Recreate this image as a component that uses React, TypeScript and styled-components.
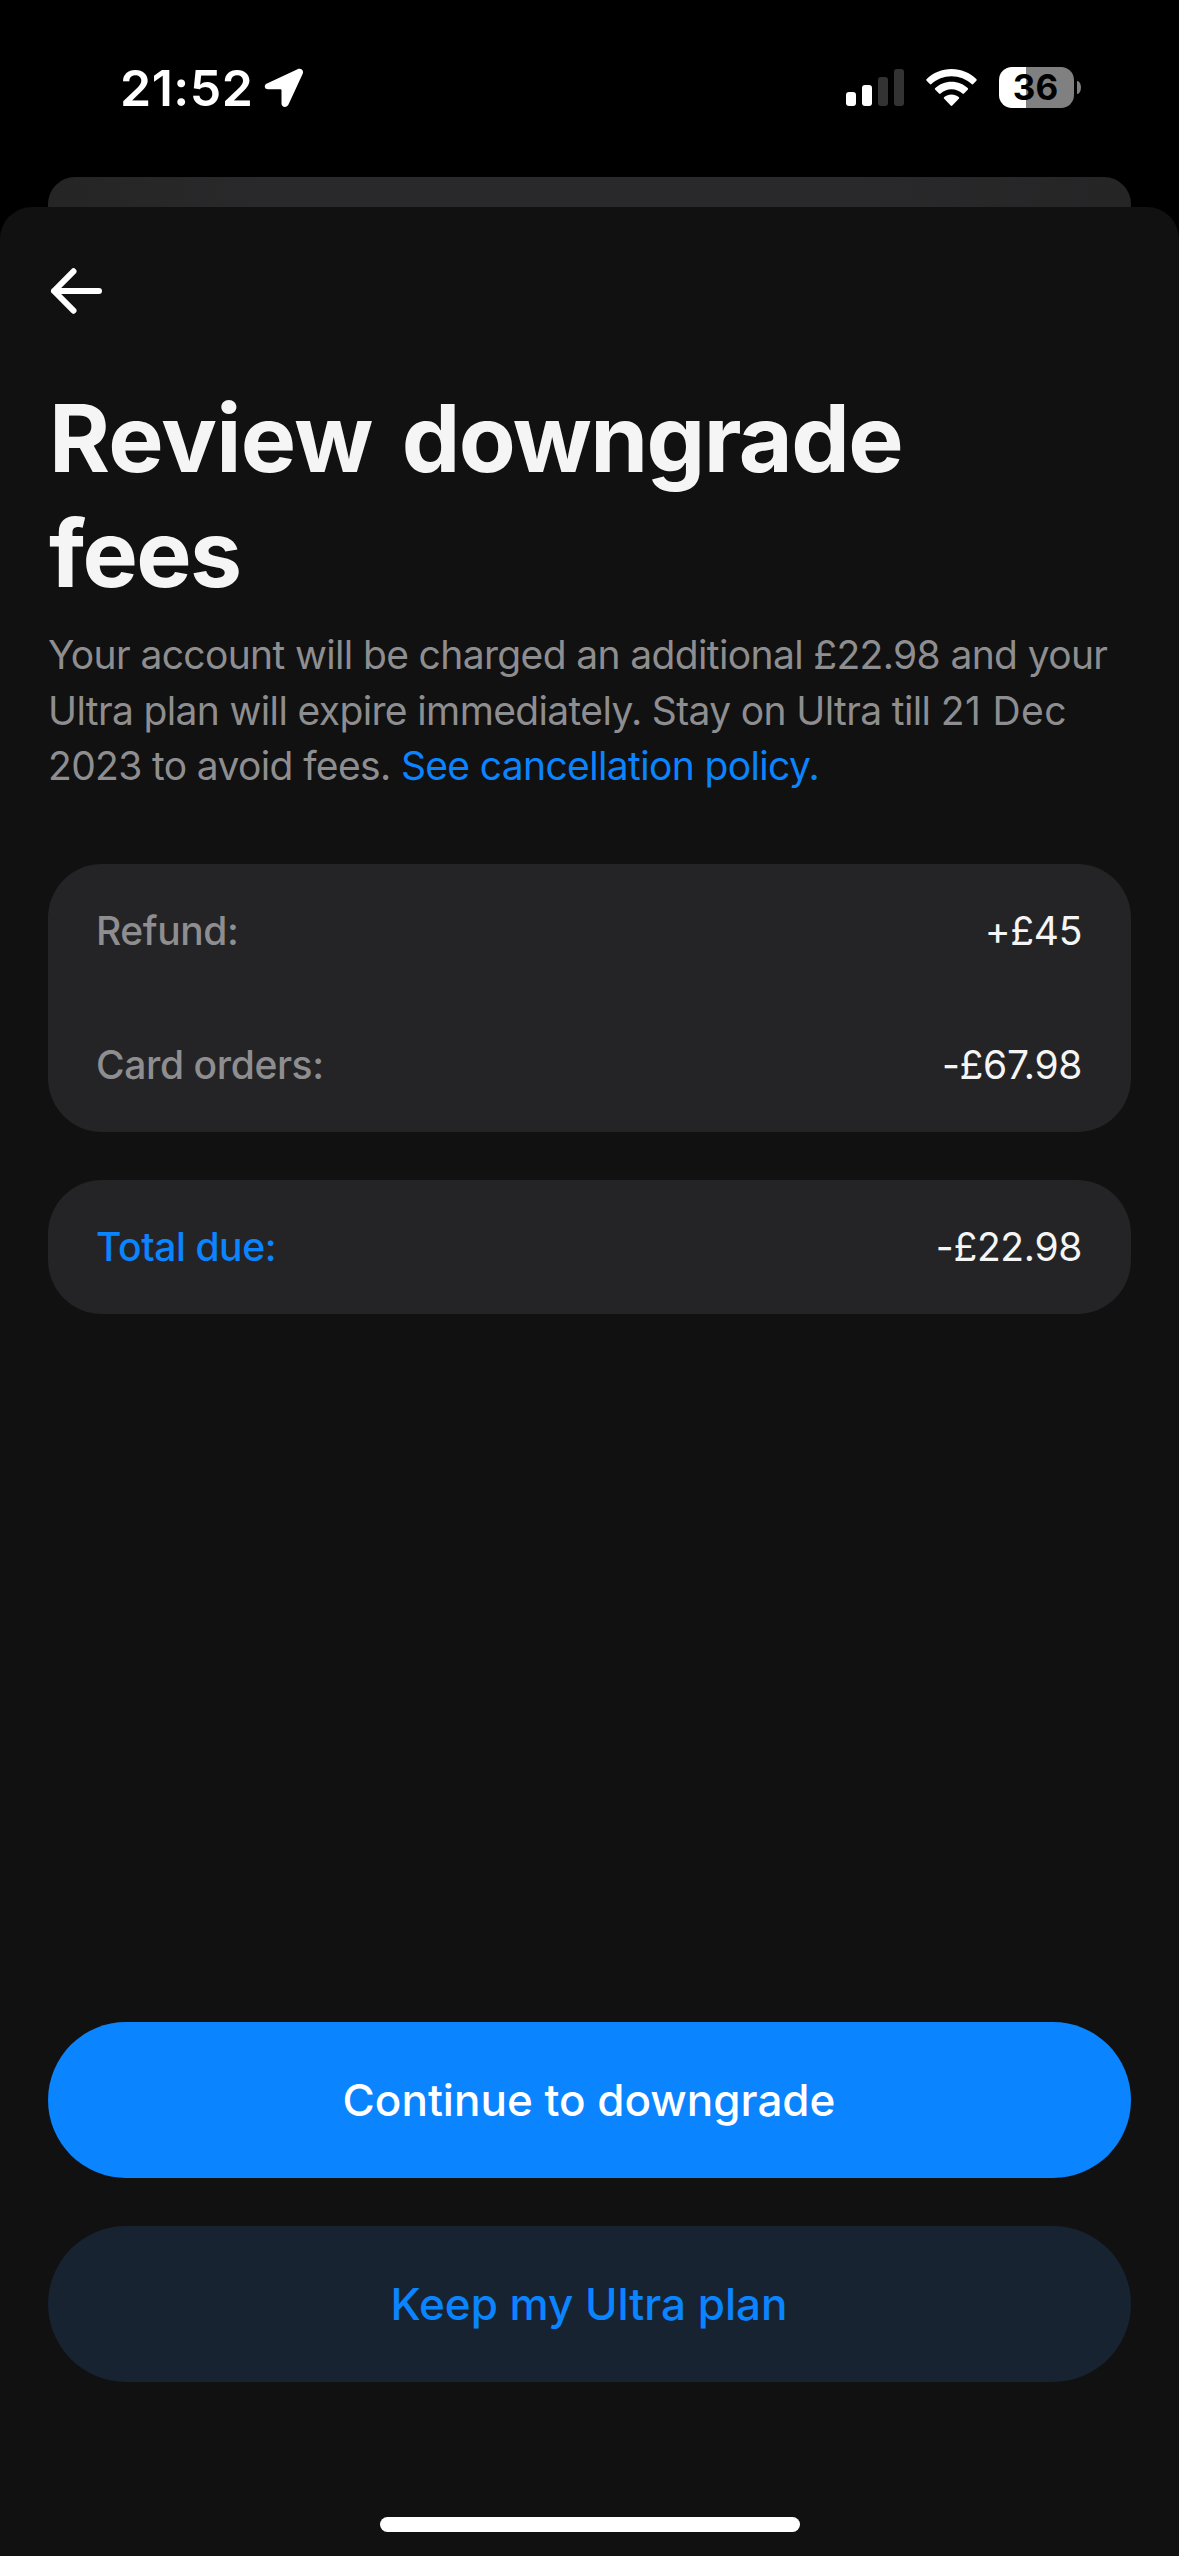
import React from "react";
import styled, { createGlobalStyle } from "styled-components";

const color = {
  sheet: "#111111",
  card: "#242426",
  accent: "#0a84ff",
  muted: "#8e8e90",
  text: "#f5f5f5",
};

const GlobalStyle = createGlobalStyle`
  *, *::before, *::after { box-sizing: border-box; }
  html, body { margin: 0; padding: 0; background: #000; }
  body { font-family: Inter, "Liberation Sans", sans-serif; }
  h1, p, dl, dt, dd { margin: 0; }
`;

const Screen = styled.div`
  width: 1179px;
  height: 2556px;
  display: flex;
  flex-direction: column;
  background: #000;
  overflow: hidden;
`;

const StatusBar = styled.header`
  height: 177px;
  flex: none;
  padding: 64px 98px 0 120px;
  display: flex;
  justify-content: space-between;
  align-items: flex-start;
`;

const TimeGroup = styled.div`
  display: flex;
  align-items: center;
  height: 48px;
  gap: 13px;
  color: #fff;
`;

const Time = styled.span`
  width: 131px;
  font-size: 50px;
  line-height: 48px;
  font-weight: 600;
  letter-spacing: 0.5px;
  white-space: nowrap;
`;

const Indicators = styled.div`
  display: flex;
  align-items: center;
  height: 47px;
`;

const SignalIcon = styled.svg`
  width: 58px;
  height: 37px;
  margin-right: 22px;
`;

const WifiIcon = styled.svg`
  width: 51px;
  height: 37px;
  margin-right: 22px;
`;

const Battery = styled.div`
  display: flex;
  align-items: center;
  gap: 3px;
`;

const BatteryBody = styled.div<{ $level: number }>`
  width: 75px;
  height: 41px;
  padding-right: 2px;
  border-radius: 13px;
  display: flex;
  justify-content: center;
  align-items: center;
  background: linear-gradient(
    to right,
    #fff ${(p) => p.$level}%,
    #808080 ${(p) => p.$level}%
  );
  color: #000;
  font-size: 35px;
  font-weight: 700;
  line-height: 41px;
`;

const BatteryNub = styled.div`
  width: 4px;
  height: 13px;
  border-radius: 0 4px 4px 0 / 0 7px 7px 0;
  background: #808080;
`;

const PreviousSheet = styled.div`
  flex: none;
  height: 30px;
  margin: 0 48px;
  border-radius: 27px 27px 0 0;
  background: linear-gradient(90deg, #252525, #29292b 20%, #29292b 75%, #252526);
`;

const Sheet = styled.main`
  flex: 1;
  display: flex;
  flex-direction: column;
  padding: 60px 48px 24px;
  border-radius: 32px 32px 0 0;
  background: ${color.sheet};
`;

const BackButton = styled.button`
  width: 60px;
  height: 48px;
  padding: 0;
  border: 0;
  background: none;
  color: #fff;
  svg { display: block; }
`;

const Title = styled.h1`
  margin-top: 66px;
  padding-left: 1px;
  color: ${color.text};
  font-size: 93px;
  line-height: 115px;
  font-weight: 700;
  letter-spacing: -1.6px;
  word-spacing: 8.6px;
`;

const Tracked = styled.span<{ $spacing: number }>`
  letter-spacing: ${(p) => p.$spacing}px;
`;

const Description = styled.p`
  margin-top: 16px;
  color: ${color.muted};
  font-size: 39px;
  line-height: 55.5px;
  letter-spacing: -0.64px;
  white-space: nowrap;
`;

const PolicyLink = styled.a`
  color: ${color.accent};
`;

const Cards = styled.div`
  display: flex;
  flex-direction: column;
  gap: 48px;
  margin-top: 70px;
`;

const Card = styled.dl`
  padding: 0 48px;
  border-radius: 54px;
  background: ${color.card};
`;

const Row = styled.div`
  display: flex;
  justify-content: space-between;
  align-items: center;
  height: 134px;
  font-size: 39px;
`;

const Label = styled.dt<{ $accent?: boolean }>`
  color: ${(p) => (p.$accent ? color.accent : color.muted)};
  font-weight: 500;
  letter-spacing: -0.4px;
`;

const Amount = styled.dd`
  padding-right: 1px;
  color: ${color.text};
  letter-spacing: -0.35px;
`;

const Actions = styled.div`
  display: flex;
  flex-direction: column;
  gap: 48px;
  margin-top: auto;
`;

const ActionButton = styled.button<{ $primary?: boolean }>`
  height: 156px;
  padding: 0 1px 0 0;
  border: 0;
  border-radius: 78px;
  background: ${(p) => (p.$primary ? color.accent : "#172331")};
  color: ${(p) => (p.$primary ? "#fff" : color.accent)};
  font-family: inherit;
  font-size: 44px;
  font-weight: 500;
`;

const HomeIndicator = styled.div`
  align-self: center;
  width: 420px;
  height: 15px;
  margin-top: 135px;
  border-radius: 8px;
  background: #fff;
`;

const charges = [
  { label: "Refund:", amount: "+£45" },
  { label: "Card orders:", amount: "-£67.98" },
];

export default function App() {
  return (
    <>
      <GlobalStyle />
      <Screen>
        <StatusBar>
          <TimeGroup>
            <Time>21:52</Time>
            <svg width="40" height="40" viewBox="0 0 40 40">
              <path
                d="M3 15.5 33.5 1.2c3.4-1.6 6.600.8 5.200 4.500L24.500 36.500c-1.600 3.700-7 3.200-7-1V22.500c0-.8-.4-1.200-1.200-1.200H4C.2 21.300-.4 17 3 15.500Z"
                fill="#fff"
              />
            </svg>
          </TimeGroup>
          <Indicators>
            <SignalIcon viewBox="0 0 58 37">
              <rect x="0" y="23" width="10" height="14" rx="3" fill="#fff" />
              <rect x="16" y="16" width="10" height="21" rx="3" fill="#fff" />
              <rect x="32" y="8" width="10" height="29" rx="3" fill="#333" />
              <rect x="48" y="0" width="10" height="37" rx="3" fill="#333" />
            </SignalIcon>
            <WifiIcon viewBox="0 0 51 37" fill="#fff">
              <path d="M25.500 0C35.200 0 43.800 3.700 50.300 10c.6.600.6 1.100.1 1.700l-3.200 3.300c-.5.500-1.100.5-1.600 0C40.200 10.200 33.200 7.300 25.500 7.300S10.800 10.200 5.400 15c-.5.500-1.100.5-1.600 0L.6 11.700C.1 11.100.1 10.600.7 10 7.200 3.700 15.800 0 25.500 0Z" />
              <path d="M25.500 12.800c6.300 0 12 2.400 16.200 6.300.6.600.6 1.100 0 1.700l-3.700 3.700c-.5.500-1 .5-1.600 0-2.900-2.600-6.700-4.200-10.900-4.200s-8 1.600-10.900 4.200c-.6.500-1.100.5-1.600 0l-3.700-3.700c-.6-.6-.6-1.100 0-1.700 4.200-3.900 9.900-6.300 16.200-6.300Z" />
              <path d="M25.500 25.500c2.700 0 5.200.9 7.200 2.500.7.600.7 1.200.1 1.800l-6.500 6.700c-.5.500-1.100.5-1.600 0l-6.500-6.700c-.6-.6-.6-1.200.1-1.800 2-1.600 4.500-2.500 7.200-2.500Z" />
            </WifiIcon>
            <Battery>
              <BatteryBody $level={36}>36</BatteryBody>
              <BatteryNub />
            </Battery>
          </Indicators>
        </StatusBar>
        <PreviousSheet />
        <Sheet>
          <BackButton aria-label="Back">
            <svg
              width="60"
              height="48"
              viewBox="0 0 60 48"
              fill="none"
              stroke="currentColor"
              strokeWidth="6"
              strokeLinecap="round"
              strokeLinejoin="round"
            >
              <path d="M25.500 4.300 6 24l19.500 19.700M6 24h45" />
            </svg>
          </BackButton>
          <Title>
            <Tracked $spacing={-0.7}>Review</Tracked> downgrade
            <br />
            fees
          </Title>
          <Description>
            Your account will be charged an additional £22.98 and your
            <br />
            Ultra plan will expire immediately. Stay on Ultra till{" "}
            <Tracked $spacing={0.4}>21 Dec</Tracked>
            <br />
            2023 to avoid fees. <PolicyLink>See cancellation policy.</PolicyLink>
          </Description>
          <Cards>
            <Card>
              {charges.map((c) => (
                <Row key={c.label}>
                  <Label>{c.label}</Label>
                  <Amount>{c.amount}</Amount>
                </Row>
              ))}
            </Card>
            <Card>
              <Row>
                <Label $accent>Total due:</Label>
                <Amount>-£22.98</Amount>
              </Row>
            </Card>
          </Cards>
          <Actions>
            <ActionButton $primary>Continue to downgrade</ActionButton>
            <ActionButton>Keep my Ultra plan</ActionButton>
          </Actions>
          <HomeIndicator />
        </Sheet>
      </Screen>
    </>
  );
}
